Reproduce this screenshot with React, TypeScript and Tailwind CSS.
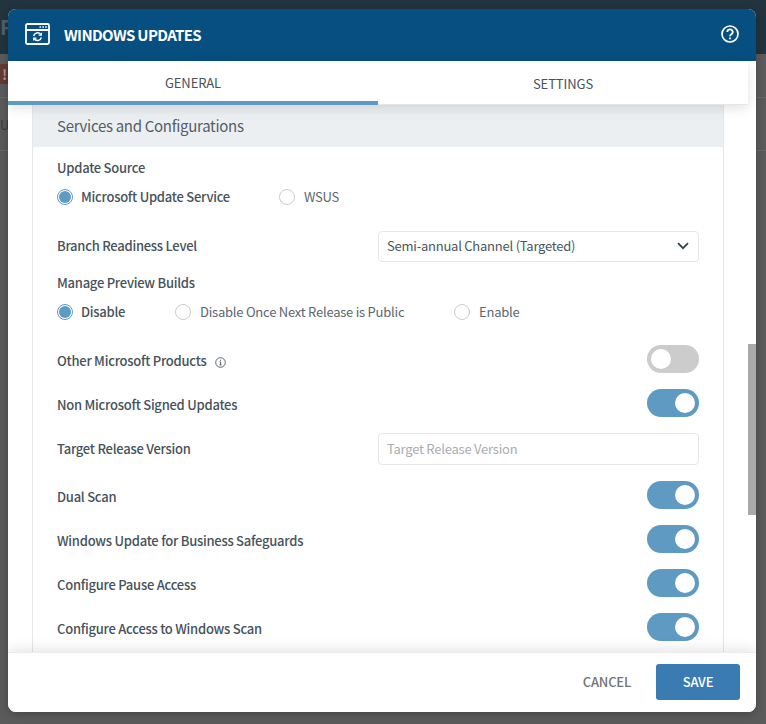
import React from "react";

const font = { fontFamily: '"Noto Sans CJK JP", "Noto Sans", sans-serif' };

function Radio({ label, checked, className = "" }: { label: string; checked?: boolean; className?: string }) {
  return (
    <div className={`flex items-center ${className}`}>
      {checked ? (
        <span className="flex h-[16px] w-[16px] items-center justify-center rounded-full border border-[#5f9ac3]">
          <span className="h-[12px] w-[12px] rounded-full bg-[#5f9ac3]" />
        </span>
      ) : (
        <span className="h-[16px] w-[16px] rounded-full border border-[#cccccc]" />
      )}
      <span className={checked ? "ml-[8px] text-[13px] font-medium tracking-[-0.25px] text-[#46525c]" : "ml-[9px] text-[13px] tracking-[-0.23px] text-[#5b6670]"}>{label}</span>
    </div>
  );
}

function Toggle({ on }: { on: boolean }) {
  return (
    <span className={`flex h-[28px] w-[52px] items-center rounded-full px-[4px] ${on ? "justify-end bg-[#5f9ac3]" : "justify-start bg-[#cccccc]"}`}>
      <span className="h-[20px] w-[20px] rounded-full bg-white" />
    </span>
  );
}

function ToggleRow({ label, on, icon, className = "" }: { label: string; on: boolean; icon?: boolean; className?: string }) {
  return (
    <div className={`flex h-[28px] items-center justify-between ${className}`}>
      <div className="flex items-center pt-[4px]">
        <span className="text-[13px] font-medium tracking-[-0.25px] text-[#46525c]">{label}</span>
        {icon && (
          <svg className="ml-[9px] mt-[2px]" width="11" height="11" viewBox="0 0 11 11" fill="none" stroke="#4a5660" strokeWidth="0.9">
            <circle cx="5.5" cy="5.5" r="4.8" />
            <path d="M4.5 4.9h1.1v2.9M4.4 7.9h2.3M5.5 2.7v1.1" />
          </svg>
        )}
      </div>
      <Toggle on={on} />
    </div>
  );
}

export default function App() {
  return (
    <div style={font} className="relative h-[724px] w-[766px] overflow-hidden bg-[#5b5b5b] leading-[20px]">
      <div className="flex h-[54px] items-center bg-[#22343f] text-[20px] font-bold text-[#555f66]">P</div>
      <div className="h-[44px] border-b border-[#686868] py-[10px]">
        <span className="block h-[20px] w-[16px] rounded-r-[4px] bg-[#643a34] pl-[2px] text-[14px] font-bold text-[#a89894]">!</span>
      </div>
      <div className="h-[53px] border-b border-[#686868] pt-[17px] text-[13px] text-[#3c3c3c]">UP</div>

      <div className="absolute left-[8px] top-[9px] flex h-[703px] w-[748px] flex-col overflow-hidden rounded-[8px] bg-white shadow-[0_2px_10px_rgba(0,0,0,0.25)]">
        <header className="flex h-[52px] shrink-0 items-center bg-[#064f80] pl-[17px] pr-[17px]">
          <svg width="25" height="22" viewBox="0 0 25 22" fill="none" stroke="white" strokeWidth="1.8" className="mt-[-2px] shrink-0">
            <rect x="1" y="1" width="23" height="20" rx="1.5" />
            <path d="M1 7h23" />
            <path d="M14.5 4h1.6M17.4 4H19M20.2 4h1.6" strokeWidth="1.4" />
            <path d="M8.6 13a4 4 0 0 1 7.2-1.4" strokeWidth="1.5" />
            <path d="M16.4 14.4a4 4 0 0 1-7.2 1.4" strokeWidth="1.5" />
            <path d="M13.6 12.2h2.8V9.8M11.4 15.2H8.6v2.4" strokeWidth="1.2" />
          </svg>
          <h1 className="ml-[14px] flex-1 text-[15px] font-bold tracking-[-0.65px] text-white">WINDOWS UPDATES</h1>
          <svg width="18" height="18" viewBox="0 0 18 18" fill="none" stroke="white" strokeWidth="1.7" className="mt-[-2px]">
            <circle cx="9" cy="9" r="8" />
            <path d="M6.3 7a2.7 2.7 0 1 1 4 2.4c-.9.5-1.3 1-1.3 1.9" strokeWidth="1.8" />
            <path d="M9 12.5v1.8" strokeWidth="1.8" />
          </svg>
        </header>

        <nav className="relative z-10 flex h-[44px] w-[740px] shrink-0 border-b border-[#e6e6e6] bg-white text-[13px] tracking-[-0.1px] text-[#46525c] shadow-[0_3px_12px_rgba(0,0,0,0.12)]">
          <div className="flex h-[44px] w-[370px] items-center justify-center border-b-4 border-[#5f9ac3] pt-[4px]">GENERAL</div>
          <div className="flex h-[44px] w-[370px] items-center justify-center pt-[1px]">SETTINGS</div>
        </nav>

        <div className="relative flex min-h-0 flex-1 overflow-hidden">
          <div className="w-[740px] shrink-0 overflow-hidden pl-[24px] pr-[24px]">
            <section className="h-[600px] w-[692px] border-x border-[#e6e6e6]">
              <div className="flex h-[42px] items-center bg-[#eceff1] pb-[1px] pl-[24px] text-[15px] tracking-[-0.3px] text-[#525e68]">Services and Configurations</div>
              <div className="pl-[24px] pr-[24px] pt-[11px]">
                <div className="text-[13px] font-medium tracking-[-0.25px] text-[#46525c]">Update Source</div>
                <div className="mt-[9px] flex h-[20px] items-center">
                  <Radio label="Microsoft Update Service" checked className="w-[222px]" />
                  <Radio label="WSUS" />
                </div>
                <div className="mt-[24px] flex h-[30px] items-center justify-between">
                  <span className="text-[13px] font-medium tracking-[-0.25px] text-[#46525c]">Branch Readiness Level</span>
                  <div className="flex h-[31px] w-[321px] items-center justify-between rounded-[4px] border border-[#e6e6e6] pl-[8px] pr-[9px] text-[13px] tracking-[-0.23px] text-[#4a5660]">
                    Semi-annual Channel (Targeted)
                    <svg width="12" height="8" viewBox="0 0 12 8" fill="none" stroke="#36424b" strokeWidth="1.8">
                      <path d="M1 1.2l5 5 5-5" />
                    </svg>
                  </div>
                </div>
                <div className="mt-[12px] text-[13px] font-medium tracking-[-0.25px] text-[#46525c]">Manage Preview Builds</div>
                <div className="mt-[9px] flex h-[20px] items-center">
                  <Radio label="Disable" checked className="w-[118px]" />
                  <Radio label="Disable Once Next Release is Public" className="w-[279px]" />
                  <Radio label="Enable" />
                </div>
                <ToggleRow label="Other Microsoft Products" icon on={false} className="mt-[23px]" />
                <ToggleRow label="Non Microsoft Signed Updates" on className="mt-[16px]" />
                <div className="mt-[16px] flex h-[32px] items-center justify-between">
                  <span className="text-[13px] font-medium tracking-[-0.25px] text-[#46525c]">Target Release Version</span>
                  <div className="flex h-[32px] w-[321px] items-center rounded-[4px] border border-[#e6e6e6] pl-[8px] text-[13px] tracking-[-0.23px] text-[#a8adb1]">Target Release Version</div>
                </div>
                <ToggleRow label="Dual Scan" on className="mt-[16px]" />
                <ToggleRow label="Windows Update for Business Safeguards" on className="mt-[16px]" />
                <ToggleRow label="Configure Pause Access" on className="mt-[16px]" />
                <ToggleRow label="Configure Access to Windows Scan" on className="mt-[16px]" />
              </div>
            </section>
          </div>
          <div className="w-[8px] shrink-0 pt-[239px]">
            <div className="h-[171px] w-[8px] bg-[#a9a9a9]" />
          </div>
        </div>

        <footer className="relative z-10 flex h-[60px] shrink-0 items-center justify-end border-t border-[#ececec] bg-white pb-[1px] pr-[16px] shadow-[0_-3px_12px_rgba(0,0,0,0.1)]">
          <span className="mr-[25px] text-[13px] font-medium tracking-[-0.2px] text-[#737373]">CANCEL</span>
          <button className="h-[36px] w-[84px] rounded-[3px] bg-[#3a7cb1] text-[13px] font-medium tracking-[-0.2px] text-white">SAVE</button>
        </footer>
      </div>
    </div>
  );
}
